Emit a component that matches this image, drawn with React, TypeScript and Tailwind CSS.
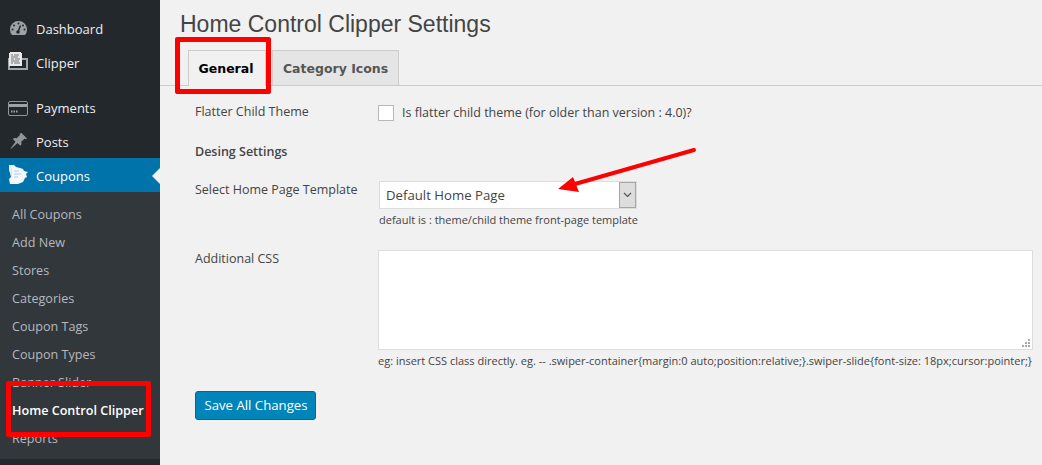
import React from "react";

const sub = ["All Coupons", "Add New", "Stores", "Categories", "Coupon Tags", "Coupon Types", "Banner Slider", "Home Control Clipper", "Reports"];

const Gauge = () => (
  <svg className="mb-[3px]" width="17" height="14" viewBox="0 0 17 14">
    <path d="M2 14A8.500 8.500 0 1 1 15 14Z" fill="#9ca2a7" />
    <g fill="#23282d">
      <circle cx="8.500" cy="2.500" r="1" />
      <circle cx="4" cy="4.500" r="1" />
      <circle cx="13" cy="4.500" r="1" />
      <circle cx="2.500" cy="8.500" r="1" />
      <circle cx="14.500" cy="8.500" r="1" />
      <circle cx="8" cy="11" r="1.800" />
    </g>
    <path d="M8 11l2.500-6.500" stroke="#23282d" strokeWidth="1.500" />
  </svg>
);

const ClipperIcon = () => (
  <svg className="mb-[5px]" width="20" height="18" viewBox="0 0 20 18">
    <rect x="1" y="7" width="18" height="10" fill="#23282d" stroke="#a0a5aa" strokeWidth="2" />
    <path d="M2 0h11v1h1v13H1V1h1z" fill="#e8e9ea" />
    <path d="M3 3h2M6 3h5M3 5h7M3 7h3M7 7h5M3 9h8M3 11h2M6 11h6" stroke="#70757a" strokeWidth="1" />
  </svg>
);

const CardIcon = () => (
  <svg width="20" height="15" viewBox="0 0 20 15">
    <rect x="0.500" y="0.500" width="19" height="14" rx="1.500" fill="#23282d" stroke="#8f959a" />
    <rect x="1" y="3" width="18" height="3" fill="#9ca2a7" />
    <path d="M3 10.500h1.500M5.500 10.500H7M8 10.500h1.500" stroke="#9ca2a7" strokeWidth="2" />
  </svg>
);

const Pin = () => (
  <svg className="mb-[2px]" width="19" height="19" viewBox="0 0 20 20" fill="#8f959a">
    <path d="M13.100 1 19 6.900l-1.400.6-1-.7-3.700 3.500c.6 1.600.2 3.200-.8 4.300l-3.100-3.100L2 18l-.4-.4 5.200-7.400-2.800-2.900C5 6.200 6.600 5.900 8.200 6.500l3.500-3.700-.7-1z" />
  </svg>
);

const CouponIcon = () => (
  <svg width="21" height="20" viewBox="0 0 21 20">
    <path d="M1 0h5l2 2 4 1 3 1 1 2 4 1-2 2 1 3-2 1-2 4-5 2H2l-1-5 2-2-1-4-1-3z" fill="#f4f8fa" />
    <path d="M3 3h1M3 5h1M3 7h1M3 9h1M3 11h1M6 6h5M6 9h7M6 12h4" stroke="#a9cde0" strokeWidth="1" />
  </svg>
);

function MenuItem({ icon, label, active }: { icon: React.ReactNode; label: string; active?: boolean }) {
  return (
    <div className={`relative flex h-[34px] items-center ${active ? "bg-[#0073aa] text-white" : "text-[#eeeeee]"}`}>
      <div className="flex w-9 justify-center">{icon}</div>
      <span className={`text-[13px] ${active ? "pt-[4px]" : "pt-[2px]"}`}>{label}</span>
      {active && (
        <div className="absolute right-0 top-[10px] h-0 w-0 border-y-[8px] border-r-[8px] border-y-transparent border-r-[#f1f1f1]" />
      )}
    </div>
  );
}

export default function App() {
  return (
    <div className="relative flex h-[465px] w-[1042px] overflow-hidden bg-[#f1f1f1] font-['Open_Sans',sans-serif] text-[#444444]">
      <aside className="h-full w-[160px] shrink-0 bg-[#23282d] pt-3">
        <MenuItem icon={<Gauge />} label="Dashboard" />
        <MenuItem icon={<ClipperIcon />} label="Clipper" />
        <div className="h-[11px]" />
        <MenuItem icon={<CardIcon />} label="Payments" />
        <MenuItem icon={<Pin />} label="Posts" />
        <div className="-mt-px">
          <MenuItem icon={<CouponIcon />} label="Coupons" active />
        </div>
        <ul className="bg-[#32373c] pt-[9px] pb-[6px] text-[12.6px] text-[#b4b9be]">
          {sub.map((s) => (
            <li key={s} className={`flex h-[28px] items-center pl-3 ${s === "Home Control Clipper" ? "font-semibold text-white" : ""}`}>
              {s}
            </li>
          ))}
        </ul>
      </aside>

      <main className="min-w-0 flex-1">
        <h1 className="ml-5 mt-[10px] font-['Liberation_Sans',sans-serif] text-[23px] leading-[29px] text-[#444444]">
          Home Control Clipper Settings
        </h1>
        <div className="mt-[11px] flex h-[36px] items-end gap-[6px] border-b border-[#cccccc] pl-7">
          <div className="-mb-px flex h-[36px] w-[78px] items-center justify-center border border-b-0 border-[#cccccc] bg-[#f1f1f1] pr-[2px] pt-[2px] font-['DejaVu_Sans',sans-serif] text-[12.5px] font-bold text-black">
            General
          </div>
          <div className="flex h-[35px] w-[127px] items-center justify-center border border-b-0 border-[#cccccc] bg-[#e5e5e5] pt-[2px] font-['DejaVu_Sans',sans-serif] text-[12.5px] font-bold text-[#555555]">
            Category Icons
          </div>
        </div>

        <div className="pl-[35px] text-[12.5px]">
          <div className="mt-[16px] flex h-[20px] items-center">
            <label className="w-[183px] shrink-0">Flatter Child Theme</label>
            <div className="mr-2 mt-[2px] h-4 w-4 border border-[#b4b9be] bg-white" />
            <span className="pt-[3px]">Is flatter child theme (for older than version : 4.0)?</span>
          </div>
          <div className="mt-[20px] h-[20px] font-semibold leading-[20px]">Desing Settings</div>
          <div className="mt-[19px] flex">
            <label className="h-[18px] w-[184px] shrink-0 leading-[18px]">Select Home Page Template</label>
            <div>
              <div className="flex h-[28px] w-[258px] border border-[#dddddd] bg-white">
                <span className="flex-1 pl-[6px] text-[13.2px] leading-[26px]">Default Home Page</span>
                <div className="flex w-[17px] items-center justify-center border border-[#a6a6a6] bg-[#dddddd]">
                  <svg width="9" height="6" viewBox="0 0 9 6" fill="none" stroke="#555555" strokeWidth="1.200">
                    <path d="M1 1l3.500 3.500L8 1" />
                  </svg>
                </div>
              </div>
              <p className="mt-[3px] text-[11px] leading-[16px]">default is : theme/child theme front-page template</p>
            </div>
          </div>
          <div className="mt-[22px] flex">
            <label className="h-[18px] w-[183px] shrink-0 leading-[18px]">Additional CSS</label>
            <div>
              <div className="relative">
                <textarea className="block h-[100px] w-[655px] resize-none border border-[#dddddd] bg-white" />
                <svg className="pointer-events-none absolute bottom-[3px] right-[3px]" width="8" height="8" viewBox="0 0 8 8" fill="#a8a8a8">
                  <rect x="6" y="0" width="2" height="2" />
                  <rect x="3" y="3" width="2" height="2" />
                  <rect x="6" y="3" width="2" height="2" />
                  <rect x="0" y="6" width="2" height="2" />
                  <rect x="3" y="6" width="2" height="2" />
                  <rect x="6" y="6" width="2" height="2" />
                </svg>
              </div>
              <p className="mt-[3px] text-[11px] leading-[16px]">
                eg: insert CSS class directly. eg. -- .swiper-container{"{margin:0 auto;position:relative;}"}.swiper-slide{"{font-size: 18px;cursor:pointer;}"}
              </p>
            </div>
          </div>
          <button className="mt-[22px] h-[29px] w-[121px] rounded-[3px] border border-[#006799] bg-[#0085ba] pl-[1px] text-[13.2px] text-white">
            Save All Changes
          </button>
        </div>
      </main>

      {/* red annotations */}
      <div className="pointer-events-none absolute left-[175px] top-[37px] h-[57px] w-[96px] rounded-[2px] border-[5px] border-[#ff0000]" />
      <div className="pointer-events-none absolute left-[6px] top-[381px] h-[56px] w-[145px] rounded-[2px] border-[5px] border-[#ff0000]" />
      <svg className="pointer-events-none absolute left-[550px] top-[140px]" width="150" height="55" viewBox="0 0 150 55">
        <path d="M144 10 L25 44" stroke="#ff0000" strokeWidth="4" strokeLinecap="round" />
        <path d="M8 49 L23 37 L29 52z" fill="#ff0000" />
      </svg>
    </div>
  );
}
